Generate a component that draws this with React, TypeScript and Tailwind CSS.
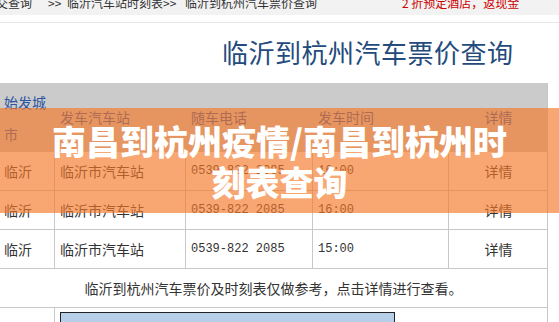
import React from "react";

const cjk = "font-['Noto_Sans_CJK_SC','Noto_Sans',sans-serif]";

export default function App() {
  const rows = [
    { city: "临沂", station: "临沂市汽车站", phone: "0539-822 2085", time: "16:00" },
    { city: "临沂", station: "临沂市汽车站", phone: "0539-822 2085", time: "16:00" },
    { city: "临沂", station: "临沂市汽车站", phone: "0539-822 2085", time: "15:00" },
  ];
  const cell = "border-r border-[#c8c8c8] flex items-center";
  return (
    <div className={`relative w-[559px] h-[322px] overflow-hidden bg-white ${cjk}`}>
      {/* top bar */}
      <div className="h-[15px] bg-[#f2f2f2] overflow-hidden flex text-[12px] leading-[12px] whitespace-nowrap">
        <div className="-ml-4 -mt-[3px] text-[#333333] w-[416px] shrink-0 flex">
          <span className="w-[48px] shrink-0">公交查询</span>
          <span className="w-[16px] shrink-0" />
          <span className="w-[19px] shrink-0">&gt;&gt;</span>
          <span className="w-[96px] shrink-0">临沂汽车站时刻表</span>
          <span className="w-[22px] shrink-0">&gt;&gt;</span>
          <span className="shrink-0">临沂到杭州汽车票价查询</span>
        </div>
        <div className="-mt-[3px] ml-[2px] text-[#cc0000]">2 折预定酒店，返现金</div>
      </div>
      <div className="h-[8px] border-b border-[#e6e6e6]" />
      {/* title */}
      <div className="h-[60px] flex items-center pl-[222px] pb-[2px]">
        <div className="text-[26px] leading-[30px] text-[#244b7c] tracking-[0.5px]">临沂到杭州汽车票价查询</div>
      </div>
      {/* table */}
      <div className="w-[548px] border-r border-[#c8c8c8] text-[14px]">
        <div className="grid grid-cols-[55px_131px_127px_136px_99px] h-[69px] bg-[#cbcbcb] text-[#2b559f]">
          <div className="flex items-center pl-[4px] leading-[32px]">始发城市</div>
          <div className="flex items-center pl-[5px]">发车汽车站</div>
          <div className="flex items-center pl-[5px]">随车电话</div>
          <div className="flex items-center pl-[5px]">发车时间</div>
          <div className="flex items-center justify-center">详情</div>
        </div>
        {rows.map((r, i) => (
          <div key={i} className="grid grid-cols-[55px_131px_127px_136px_99px] h-[39px] border-b border-[#c8c8c8] text-[#333333]">
            <div className={`${cell} pl-[4px]`}>{r.city}</div>
            <div className={`${cell} pl-[5px]`}>{r.station}</div>
            <div className={`${cell} pl-[5px] font-['Liberation_Mono',monospace] text-[12px]`}>{r.phone}</div>
            <div className={`${cell} pl-[5px] font-['Liberation_Mono',monospace] text-[12px]`}>{r.time}</div>
            <div className="flex items-center justify-center">详情</div>
          </div>
        ))}
        <div className="h-[39px] border-b border-[#c8c8c8] flex items-center justify-center text-[#333333]">
          临沂到杭州汽车票价及时刻表仅做参考，点击详情进行查看。
        </div>
        <div className="flex h-[20px]">
          <div className="w-[55px] border-r border-[#c8c8c8]" />
          <div className="pl-[5px] pt-[4px]">
            <div className="w-[335px] h-[20px] bg-[#b6cee7] border border-[#222222]" />
          </div>
        </div>
      </div>
      {/* overlay banner */}
      <div className="absolute left-0 top-[108px] w-[559px] h-[105px] bg-[rgba(245,120,40,0.65)] flex flex-col items-center justify-center">
        <div className="text-white text-[34px] leading-[41px] font-black text-center">
          南昌到杭州疫情/南昌到杭州时
        </div>
        <div className="text-white text-[34px] leading-[41px] font-black text-center">刻表查询</div>
      </div>
    </div>
  );
}
